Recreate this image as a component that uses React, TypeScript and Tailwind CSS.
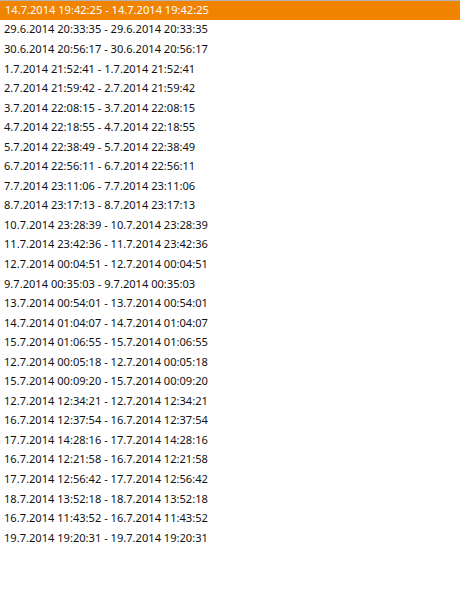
const rows = [
  "14.7.2014 19:42:25 - 14.7.2014 19:42:25",
  "29.6.2014 20:33:35 - 29.6.2014 20:33:35",
  "30.6.2014 20:56:17 - 30.6.2014 20:56:17",
  "1.7.2014 21:52:41 - 1.7.2014 21:52:41",
  "2.7.2014 21:59:42 - 2.7.2014 21:59:42",
  "3.7.2014 22:08:15 - 3.7.2014 22:08:15",
  "4.7.2014 22:18:55 - 4.7.2014 22:18:55",
  "5.7.2014 22:38:49 - 5.7.2014 22:38:49",
  "6.7.2014 22:56:11 - 6.7.2014 22:56:11",
  "7.7.2014 23:11:06 - 7.7.2014 23:11:06",
  "8.7.2014 23:17:13 - 8.7.2014 23:17:13",
  "10.7.2014 23:28:39 - 10.7.2014 23:28:39",
  "11.7.2014 23:42:36 - 11.7.2014 23:42:36",
  "12.7.2014 00:04:51 - 12.7.2014 00:04:51",
  "9.7.2014 00:35:03 - 9.7.2014 00:35:03",
  "13.7.2014 00:54:01 - 13.7.2014 00:54:01",
  "14.7.2014 01:04:07 - 14.7.2014 01:04:07",
  "15.7.2014 01:06:55 - 15.7.2014 01:06:55",
  "12.7.2014 00:05:18 - 12.7.2014 00:05:18",
  "15.7.2014 00:09:20 - 15.7.2014 00:09:20",
  "12.7.2014 12:34:21 - 12.7.2014 12:34:21",
  "16.7.2014 12:37:54 - 16.7.2014 12:37:54",
  "17.7.2014 14:28:16 - 17.7.2014 14:28:16",
  "16.7.2014 12:21:58 - 16.7.2014 12:21:58",
  "17.7.2014 12:56:42 - 17.7.2014 12:56:42",
  "18.7.2014 13:52:18 - 18.7.2014 13:52:18",
  "16.7.2014 11:43:52 - 16.7.2014 11:43:52",
  "19.7.2014 19:20:31 - 19.7.2014 19:20:31",
];

export default function App() {
  return (
    <div className="h-[608px] w-[460px] bg-white font-['Noto_Sans',sans-serif] text-[11.1px] text-[#111]">
      <ul className="border-t border-[#b4b4b4]">
        {rows.map((r, i) => (
          <li
            key={i}
            className={
              i === 0
                ? "flex h-[19px] items-center bg-[#f08300] pl-[5px] text-white"
                : "flex h-[19.55px] items-center pl-[4px]"
            }
          >
            {r}
          </li>
        ))}
      </ul>
    </div>
  );
}
